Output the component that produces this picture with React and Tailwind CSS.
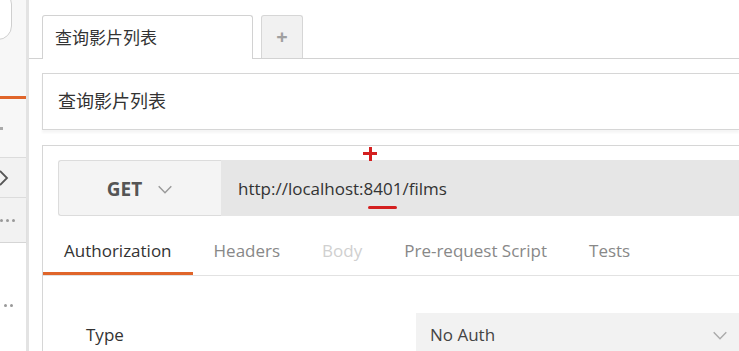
import React from "react";

const cjk = "font-['Open_Sans','Noto_Sans_CJK_SC',sans-serif]";

function Chevron({ className }) {
  return (
    <svg className={className} viewBox="0 0 16 10" fill="none" stroke="currentColor" strokeWidth="1.6">
      <path d="M1 1.5 L8 8.5 L15 1.5" />
    </svg>
  );
}

export default function App() {
  return (
    <div className={`flex h-[351px] w-[739px] overflow-hidden bg-white ${cjk}`}>
      {/* sidebar */}
      <div className="relative flex w-[26px] shrink-0 flex-col bg-[#f7f7f7]">
        <div className="absolute left-[-16px] top-[-10px] h-[50px] w-[28px] rounded-full border border-[#cfcfcf] bg-white" />
        <div className="h-[96px]" />
        <div className="h-[3px] bg-[#e0652a]" />
        <div className="flex h-[58px] items-center">
          <div className="h-[3px] w-[3px] bg-[#aaa]" />
        </div>
        <div className="flex h-[41px] items-center border-y border-[#dcdcdc] bg-[#f2f2f2] text-[#555]">
          <svg className="ml-[-1px] h-[16px] w-[10px]" viewBox="0 0 10 16" fill="none" stroke="currentColor" strokeWidth="1.8">
            <path d="M1 1 L8 8 L1 15" />
          </svg>
        </div>
        <div className="flex h-[45px] items-center gap-[3px] border-b border-[#d5d5d5] bg-[#f2f2f2] shadow-[0_2px_2px_rgba(0,0,0,0.06)]">
          <div className="h-[3px] w-[3px] rounded-full bg-[#999]" />
          <div className="h-[3px] w-[3px] rounded-full bg-[#999]" />
          <div className="h-[3px] w-[3px] rounded-full bg-[#999]" />
        </div>
        <div className="flex h-[64px] items-end gap-[3px] bg-white pl-[4px]">
          <div className="h-[3px] w-[3px] rounded-full bg-[#999]" />
          <div className="h-[3px] w-[3px] rounded-full bg-[#999]" />
        </div>
        <div className="flex-1 bg-white" />
      </div>
      <div className="w-[3px] shrink-0 bg-[#e3e3e3]" />

      {/* main */}
      <div className="flex min-w-0 flex-1 flex-col">
        {/* tab strip */}
        <div className="flex h-[59px] shrink-0 items-end gap-[8px] border-b border-[#d2d2d2] pl-[13px]">
          <div className="relative -mb-px flex h-[44px] w-[211px] items-center rounded-t-[3px] border border-b-0 border-[#d2d2d2] bg-white pl-[12px] text-[17px] text-[#333]">
            查询影片列表
          </div>
          <div className="mb-0 flex h-[43px] w-[42px] items-center justify-center rounded-t-[3px] border border-b-0 border-[#d6d6d6] bg-[#f1f1f1] text-[20px] font-bold leading-none text-[#a0a0a0]">
            +
          </div>
        </div>

        {/* title box */}
        <div className="ml-[13px] mt-[14px] flex h-[57px] shrink-0 items-center border border-r-0 border-[#d6d6d6] pl-[15px] text-[18px] text-[#333] shadow-[0_3px_2px_rgba(0,0,0,0.04)]">
          查询影片列表
        </div>

        {/* request box */}
        <div className="ml-[13px] mt-[15px] flex flex-1 flex-col border border-r-0 border-b-0 border-[#d6d6d6]">
          <div className="relative ml-[15px] mt-[14px] flex h-[56px] shrink-0">
            <div className="flex w-[163px] items-center justify-center gap-[15px] rounded-l-[3px] border border-r-0 border-[#dcdcdc] bg-[#f4f4f4] pt-[3px]">
              <span className="text-[19px] font-bold text-[#555]">GET</span>
              <Chevron className="h-[9px] w-[16px] text-[#999]" />
            </div>
            <div className="flex flex-1 items-center bg-[#e6e6e6] pl-[17px] pt-[2px] text-[17px] text-[#333]">
              http://localhost:8401/films
            </div>
            {/* red annotation marks */}
            <div className="absolute left-[305px] top-[-8px] h-[3px] w-[14px] bg-[#d42020]" />
            <div className="absolute left-[310.5px] top-[-13px] h-[14px] w-[3px] bg-[#d42020]" />
            <div className="absolute left-[310px] top-[46px] h-[3px] w-[29px] rounded-full bg-[#d42020]" />
          </div>

          {/* tabs */}
          <div className="flex h-[60px] shrink-0 items-stretch border-b border-[#e2e2e2] pt-[10px] text-[17px]">
            <div className="relative flex items-center px-[21px] text-[#333]">
              Authorization
              <div className="absolute bottom-0 left-0 right-0 h-[3px] bg-[#e0652a]" />
            </div>
            <div className="flex items-center px-[21px] text-[#888]">Headers</div>
            <div className="flex items-center px-[21px] text-[#d0d0d0]">Body</div>
            <div className="flex items-center px-[21px] text-[#888]">Pre-request Script</div>
            <div className="flex items-center px-[21px] text-[#888]">Tests</div>
          </div>

          {/* type row */}
          <div className="mt-[37px] flex">
            <div className="flex w-[373px] items-center pl-[43px] text-[17px] text-[#333]">Type</div>
            <div className="flex h-[44px] flex-1 items-center justify-between bg-[#f2f2f2] pl-[14px] pr-[11px] text-[17px] text-[#444]">
              <span>No Auth</span>
              <Chevron className="h-[9px] w-[16px] text-[#aaa]" />
            </div>
          </div>
        </div>
      </div>
    </div>
  );
}
